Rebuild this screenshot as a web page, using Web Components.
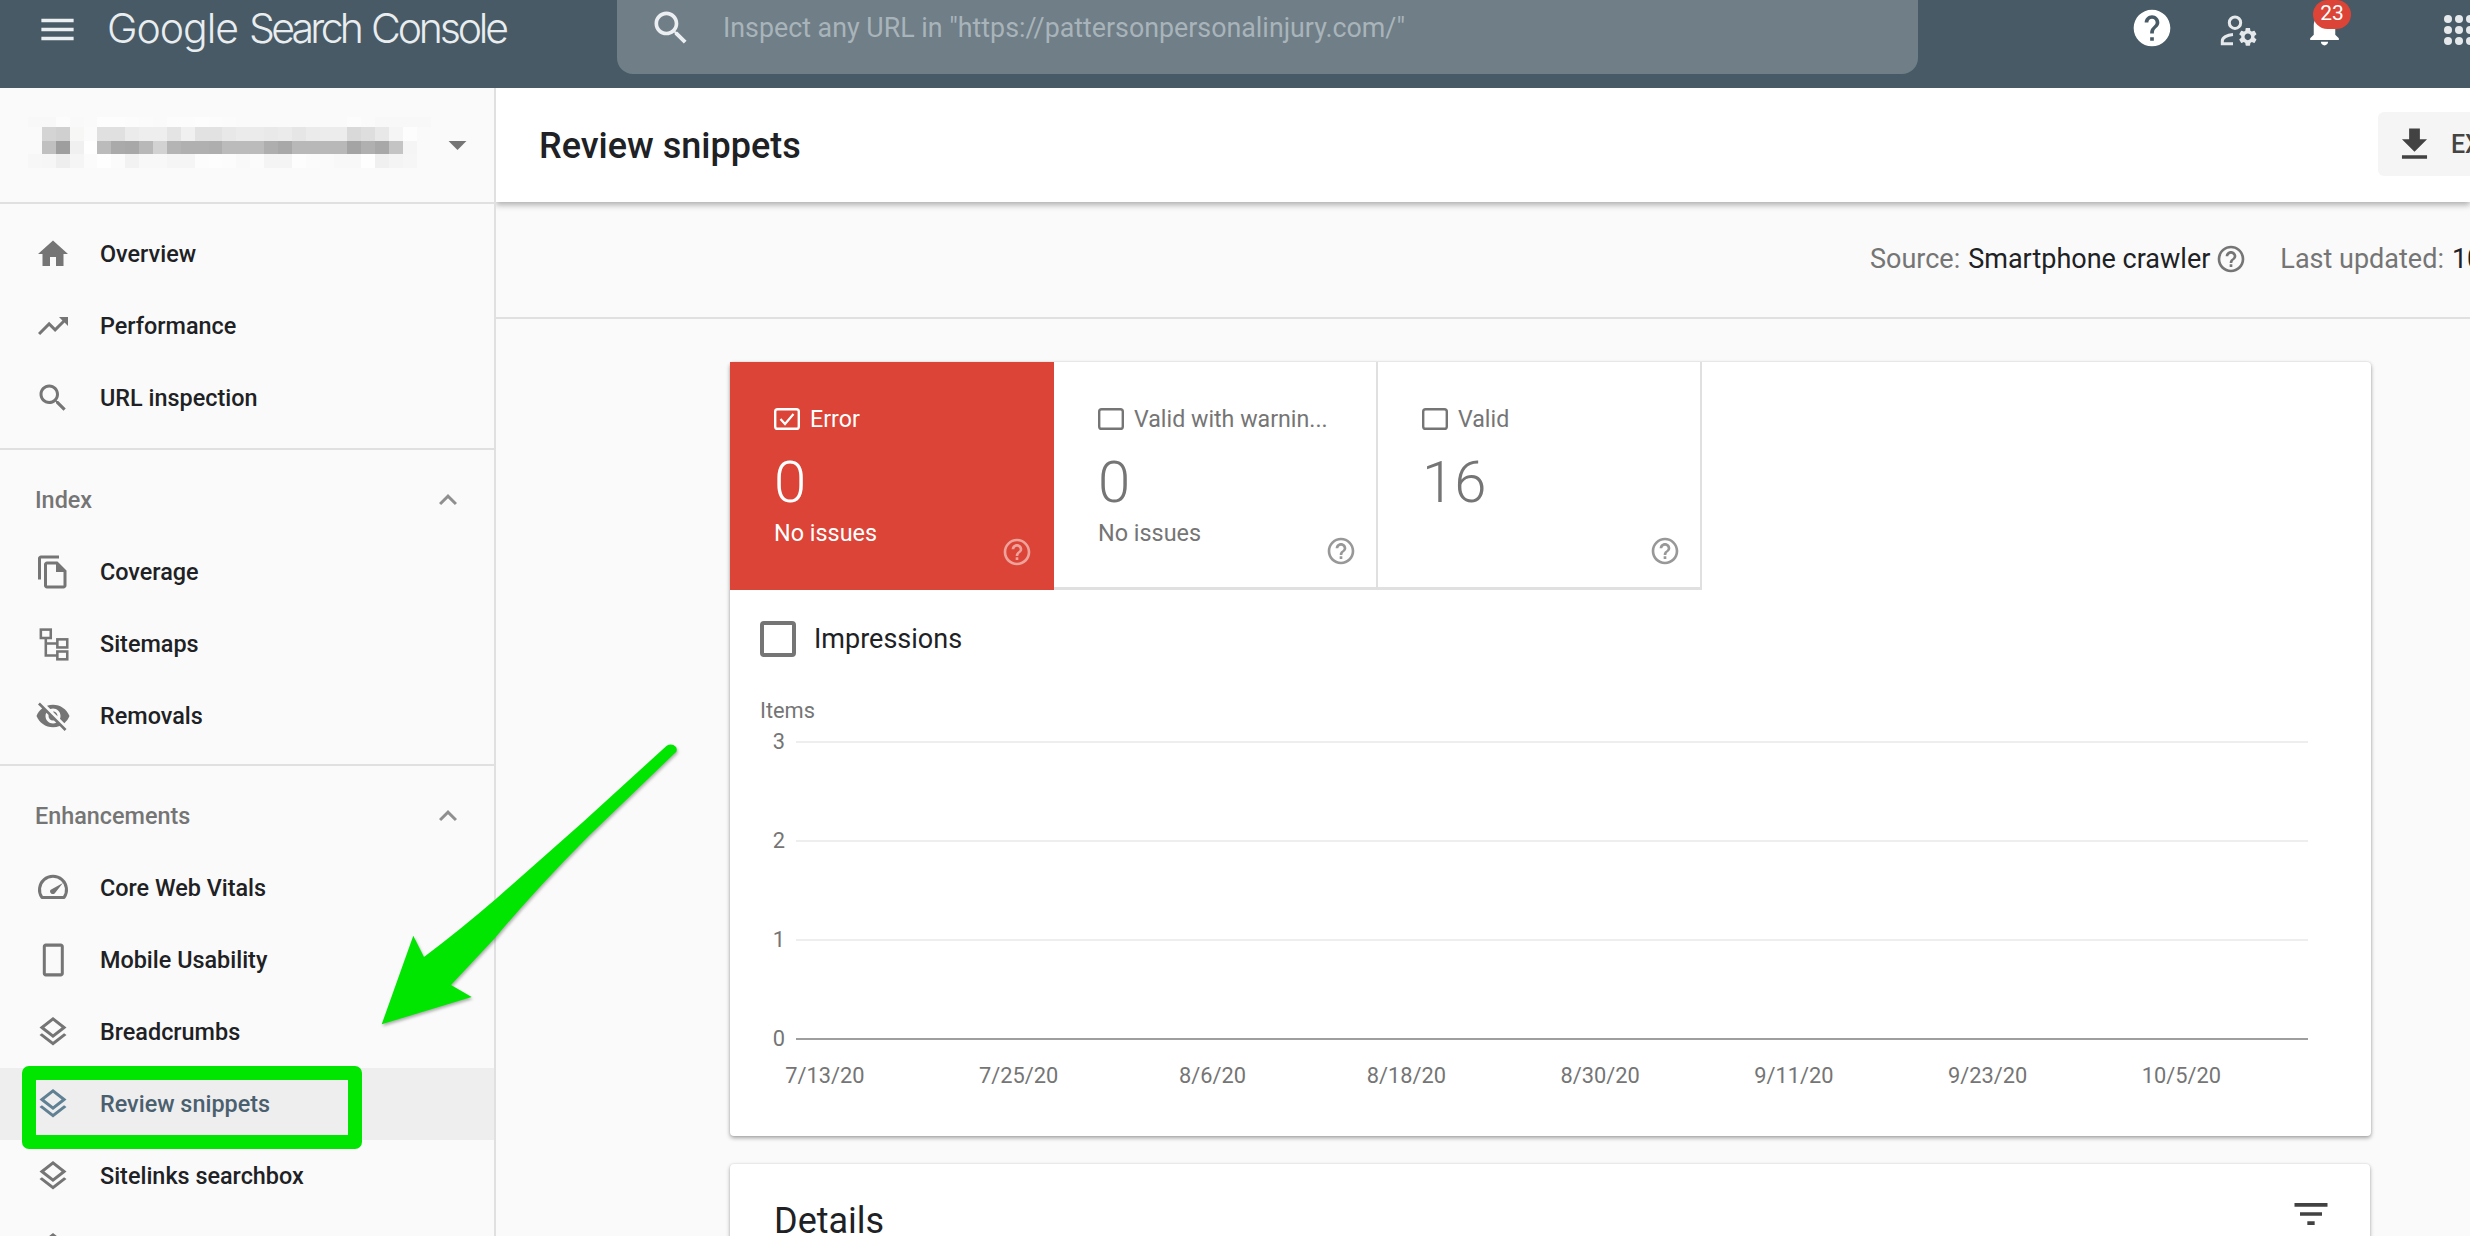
<!DOCTYPE html>
<html lang="en"><head><meta charset="utf-8"><title>Review snippets</title>
<style>
html,body{margin:0;padding:0;width:2470px;height:1236px;overflow:hidden;background:#fafafa;font-family:Roboto,"Liberation Sans",sans-serif;color:#202124}
body{display:flex;flex-direction:column;position:relative}
.shell{display:flex;height:1148px;flex:none}
</style></head><body>
<gsc-topbar></gsc-topbar>
<div class="shell">
  <gsc-sidebar>
    <gsc-property></gsc-property>
    <gsc-nav-section first>
      <gsc-nav-item icon="home">Overview</gsc-nav-item>
      <gsc-nav-item icon="trend">Performance</gsc-nav-item>
      <gsc-nav-item icon="search">URL inspection</gsc-nav-item>
    </gsc-nav-section>
    <gsc-nav-section title="Index">
      <gsc-nav-item icon="copy">Coverage</gsc-nav-item>
      <gsc-nav-item icon="sitemap">Sitemaps</gsc-nav-item>
      <gsc-nav-item icon="eyeoff">Removals</gsc-nav-item>
    </gsc-nav-section>
    <gsc-nav-section title="Enhancements">
      <gsc-nav-item icon="gauge">Core Web Vitals</gsc-nav-item>
      <gsc-nav-item icon="phone">Mobile Usability</gsc-nav-item>
      <gsc-nav-item icon="layers">Breadcrumbs</gsc-nav-item>
      <gsc-nav-item icon="layers" active>Review snippets</gsc-nav-item>
      <gsc-nav-item icon="layers">Sitelinks searchbox</gsc-nav-item>
      <gsc-nav-item icon="layers"></gsc-nav-item>
    </gsc-nav-section>
  </gsc-sidebar>
  <gsc-main>
    <gsc-page-header>Review snippets</gsc-page-header>
    <gsc-source-bar></gsc-source-bar>
    <gsc-content>
      <gsc-card>
        <gsc-tiles>
          <gsc-tile label="Error" count="0" desc="No issues" selected></gsc-tile>
          <gsc-tile label="Valid with warnin..." count="0" desc="No issues"></gsc-tile>
          <gsc-tile label="Valid" count="16"></gsc-tile>
        </gsc-tiles>
        <gsc-toggle>Impressions</gsc-toggle>
        <gsc-chart></gsc-chart>
      </gsc-card>
      <gsc-details>Details</gsc-details>
    </gsc-content>
  </gsc-main>
</div>
<gsc-highlight></gsc-highlight>
<gsc-arrow></gsc-arrow>
<script>
const P={
home:'<path d="M10 20v-6h4v6h5v-8h3L12 3 2 12h3v8z"/>',
trend:'<path d="M16 6l2.29 2.29-4.88 4.88-4-4L2 16.59 3.41 18l6-6 4 4 6.3-6.29L22 12V6z"/>',
search:'<path d="M15.5 14h-.79l-.28-.27C15.41 12.59 16 11.11 16 9.5 16 5.91 13.09 3 9.5 3S3 5.91 3 9.5 5.91 16 9.5 16c1.61 0 3.09-.59 4.23-1.57l.27.28v.79l5 4.99L20.49 19l-4.99-5zm-6 0C7.01 14 5 11.99 5 9.5S7.01 5 9.5 5 14 7.01 14 9.5 11.99 14 9.5 14z"/>',
copy:'<path d="M16 1H4c-1.1 0-2 .9-2 2v14h2V3h12V1zm-1 4H8c-1.1 0-1.99.9-1.99 2L6 21c0 1.1.89 2 1.99 2H19c1.1 0 2-.9 2-2V11l-6-6zM8 21V7h6v5h5v9H8z"/>',
sitemap:'<g fill="none" stroke="currentColor" stroke-width="1.7"><rect x="3.9" y="2.4" width="6.6" height="5.6"/><rect x="14.9" y="8.9" width="6.6" height="5.4"/><rect x="14.9" y="17" width="6.6" height="5.2"/><path d="M7.2 8v11.6h7.7M7.2 11.6h7.7"/></g>',
eyeoff:'<path d="M12 7c2.76 0 5 2.24 5 5 0 .65-.13 1.26-.36 1.83l2.92 2.92c1.51-1.26 2.7-2.89 3.43-4.75-1.73-4.39-6-7.5-11-7.5-1.4 0-2.74.25-3.98.7l2.16 2.16C10.74 7.13 11.35 7 12 7zM2 4.27l2.28 2.28.46.46C3.08 8.3 1.78 10.02 1 12c1.73 4.39 6 7.5 11 7.5 1.55 0 3.03-.3 4.38-.84l.42.42L19.73 22 21 20.73 3.27 3 2 4.27zM7.53 9.8l1.55 1.55c-.05.21-.08.43-.08.65 0 1.66 1.34 3 3 3 .22 0 .44-.03.65-.08l1.55 1.55c-.67.33-1.41.53-2.2.53-2.76 0-5-2.24-5-5 0-.79.2-1.53.53-2.2zm4.31-.78l3.15 3.15.02-.16c0-1.66-1.34-3-3-3l-.17.01z"/>',
gauge:'<path fill="none" stroke="currentColor" stroke-width="2" stroke-linejoin="round" d="M4.6 18.3A9 9 0 1 1 19.4 18.3Z"/><path d="M18.6 8.6L13.1 15.6A1.9 1.9 0 0 1 10.2 13.3Z"/>',
phone:'<path d="M17.2 1H7.2c-1.1 0-2 .9-2 2v18c0 1.1.9 2 2 2h10c1.1 0 2-.9 2-2V3c0-1.1-.9-2-2-2zM17.2 20.8h-10V3.2h10z"/>',
layers:'<path d="M11.99 18.54l-7.37-5.73L3 14.07l9 7 9-7-1.63-1.27-7.38 5.74zM12 16l7.36-5.73L21 9l-9-7-9 7 1.63 1.27L12 16zm0-11.47L17.74 9 12 13.47 6.26 9 12 4.53z"/>',
help:'<path d="M11 18h2v-2h-2v2zm1-16C6.48 2 2 6.48 2 12s4.48 10 10 10 10-4.48 10-10S17.52 2 12 2zm0 18c-4.41 0-8-3.59-8-8s3.59-8 8-8 8 3.59 8 8-3.59 8-8 8zm0-14c-2.21 0-4 1.79-4 4h2c0-1.1.9-2 2-2s2 .9 2 2c0 2-3 1.75-3 5h2c0-2.25 3-2.5 3-5 0-2.21-1.79-4-4-4z"/>',
helpfill:'<path d="M12 2C6.48 2 2 6.48 2 12s4.48 10 10 10 10-4.48 10-10S17.52 2 12 2zm1 17h-2v-2h2v2zm2.07-7.75l-.9.92C13.45 12.9 13 13.5 13 15h-2v-.5c0-1.1.45-2.1 1.17-2.83l1.24-1.26c.37-.36.59-.86.59-1.41 0-1.1-.9-2-2-2s-2 .9-2 2H8c0-2.21 1.79-4 4-4s4 1.79 4 4c0 .88-.36 1.68-.93 2.25z"/>',
menu:'<path d="M3 18h18v-2H3v2zm0-5h18v-2H3v2zm0-7v2h18V6H3z"/>',
bell:'<path d="M12 22c1.1 0 2-.9 2-2h-4c0 1.1.89 2 2 2zm6-6v-5c0-3.07-1.64-5.64-4.5-6.32V4c0-.83-.67-1.5-1.5-1.5s-1.5.67-1.5 1.5v.68C7.63 5.36 6 7.92 6 11v5l-2 2v1h16v-1l-2-2z"/>',
download:'<path d="M19 9h-4V3H9v6H5l7 7 7-7zM5 18v2h14v-2H5z"/>',
filter:'<path d="M10 18h4v-2h-4v2zM3 6v2h18V6H3zm3 7h12v-2H6v2z"/>',
up:'<path d="M12 8l-6 6 1.41 1.41L12 10.83l4.59 4.58L18 14z"/>',
drop:'<path d="M7 10l5 5 5-5z"/>'
};
function def(name,css,html,extra){
  customElements.define(name,class extends HTMLElement{
    connectedCallback(){
      if(this.shadowRoot)return;
      const r=this.attachShadow({mode:'open'});
      r.innerHTML='<style>'+css+'</style>'+(typeof html==='function'?html(this):html);
      if(extra)extra(this,r);
    }
  });
}
def('gsc-icon',':host{display:block;flex:none;width:var(--s,36px);height:var(--s,36px);color:var(--c,#757575)}svg{display:block;width:100%;height:100%;fill:currentColor}',
  h=>`<svg viewBox="0 0 24 24" aria-hidden="true">${P[h.getAttribute('name')]||''}</svg>`);

def('gsc-topbar',`
:host{display:flex;flex:none;height:88px;background:#475a65;align-items:flex-start;color:#eceff1;position:relative;z-index:3}
.menu{--s:43px;--c:#eceff1;margin:8px 0 0 36px}
.logo{display:flex;margin:0 0 0 28px;height:56px;align-items:center;font:300 41px/60px Inter,Lato,sans-serif;color:#e9edef;white-space:nowrap;width:402px;flex:none}
.logo span{display:block;flex:none}
.logo .g{width:142px}
.logo .s{width:122px}
.logo .c{width:138px}
.search{display:flex;align-items:center;box-sizing:border-box;margin-left:108px;width:1301px;height:74px;background:#6f7e87;border-radius:0 0 16px 16px;flex:none;padding-bottom:18px}
.search gsc-icon{--s:44px;--c:#eceff1;margin-left:32px}
.search span{font:400 26.8px/1 Roboto,sans-serif;color:#a9b4ba;margin-left:30px;white-space:nowrap}
.help{--s:44px;--c:#fff;margin:6px 0 0 212px}
.admin{display:block;width:40px;height:36px;margin:14px 0 0 45px;flex:none}
.bellwrap{position:relative;margin:6px 0 0 44px;flex:none;width:43px;height:44px}
.bell{--s:43px;--c:#fff}
.badge{position:absolute;left:10px;top:-6px;width:38px;height:29px;border-radius:15px;background:#db4437;color:#fff;font:400 21px/27px Roboto,sans-serif;text-align:center}
.apps{display:grid;grid-template-columns:repeat(3,8px);gap:3.2px;margin:15px 0 0 98px;flex:none}
.apps i{display:block;width:8px;height:8px;border-radius:50%;background:#e6e9eb}
`,`
<gsc-icon class="menu" name="menu"></gsc-icon>
<div class="logo"><span class="g" data-w="132">Google</span><span class="s" data-w="115">Search</span><span class="c" data-w="138">Console</span></div>
<div class="search"><gsc-icon name="search"></gsc-icon><span>Inspect any URL in "https://pattersonpersonalinjury.com/"</span></div>
<gsc-icon class="help" name="helpfill"></gsc-icon>
<svg class="admin" viewBox="0 0 40 36" fill="none" stroke="#e6e9eb"><circle cx="16" cy="8.7" r="5.7" stroke-width="3"/><path d="M14 20.5C8 21 3.3 23.5 3.3 27v2.7H14" stroke-width="3"/><g transform="translate(17.8 11.8) scale(.92)"><path fill="#e6e9eb" stroke="none" d="M19.14 12.94c.04-.3.06-.61.06-.94 0-.32-.02-.64-.07-.94l2.03-1.58c.18-.14.23-.41.12-.61l-1.92-3.32c-.12-.22-.37-.29-.59-.22l-2.39.96c-.5-.38-1.03-.7-1.62-.94l-.36-2.54c-.04-.24-.24-.41-.48-.41h-3.84c-.24 0-.43.17-.47.41l-.36 2.54c-.59.24-1.13.57-1.62.94l-2.39-.96c-.22-.08-.47 0-.59.22L2.74 8.87c-.12.21-.08.47.12.61l2.03 1.58c-.05.3-.09.63-.09.94s.02.64.07.94l-2.03 1.58c-.18.14-.23.41-.12.61l1.92 3.32c.12.22.37.29.59.22l2.39-.96c.5.38 1.03.7 1.62.94l.36 2.54c.05.24.24.41.48.41h3.84c.24 0 .44-.17.47-.41l.36-2.54c.59-.24 1.13-.56 1.62-.94l2.39.96c.22.08.47 0 .59-.22l1.92-3.32c.12-.22.07-.47-.12-.61l-2.01-1.58zM12 15.6c-1.98 0-3.6-1.62-3.6-3.6s1.62-3.6 3.6-3.6 3.6 1.62 3.6 3.6-1.62 3.6-3.6 3.6z"/></g></svg>
<div class="bellwrap"><gsc-icon class="bell" name="bell"></gsc-icon><div class="badge">23</div></div>
<div class="apps">${'<i></i>'.repeat(9)}</div>
`,(h,r)=>{
  r.querySelectorAll('.logo span').forEach(s=>{
    const m=document.createElement('span');m.textContent=s.textContent;m.style.cssText='display:inline-block;width:auto';
    s.textContent='';s.appendChild(m);
    const w=m.getBoundingClientRect().width;
    m.style.letterSpacing=((+s.dataset.w-w)/(m.textContent.length-1)).toFixed(3)+'px';
  });
});

def('gsc-sidebar',':host{display:block;flex:none;box-sizing:border-box;width:496px;height:1148px;background:#fafafa;border-right:2px solid #e0e0e0;overflow:hidden}','<slot></slot>');

const rows=[
'f8f8f8 f8f8f8 fcfcfc f9f9f9 fafafa fdfdfd fdfdfd fcfcfc fbfbfb fafafa fcfcfc fcfcfc fdfdfd fcfcfc fbfbfb fafafa fafafa fafafa fafafa fafafa fafafa fafafa fafafa fcfcfc fafafa f8f8f8 f8f8f8 f8f8f8 f8f8f8',
'fafafa d4d4d4 d0d0d0 f7f7f5 fbfbfb e0e0e0 e0e0e0 ebebeb eeeeee eeeeee e4e4e4 f0f0f0 e2e2e2 e2e2e2 e8e8e8 ebebeb ebebeb e9e9e9 ebebeb e6e6e6 ebebeb ececec ececec d9d9d9 dedede e8e8e8 f5f5f5 fdfdfd fafafa',
'fafafa c0c0c0 9e9e9e f0f0f0 fefefe bbbbbb aaaaaa a8a8a8 b8b8b8 d2d2d2 b4b4b4 b0b0b0 b0b0b0 aeaeae bbbbbb bbbbbb bbbbbb aeaeae a8a8a8 b8b8b8 b8b8b8 b8b8b8 b8b8b8 a4a4a4 b0b0b0 a8a8a8 c4c4c4 f5f5f5 fafafa',
'f7f7f7 f6f6f6 eeeeee f5f5f5 fbfbfb fefefe fbfbfb f2f2f2 f8f8f8 f8f8f8 f5f5f5 f5f5f5 fcfcfc fdfdfd fcfcfc f9f9f9 fbfbfb f4f4f4 f4f4f4 fdfdfd fbfbfb fafafa f8f8f8 f8f8f8 fefefe f0f0f0 f4f4f4 f6f6f6 fafafa'
];
def('gsc-property',`
:host{display:flex;box-sizing:border-box;height:116px;border-bottom:2px solid #e0e0e0;padding:29px 0 0 28px;gap:0}
.mosaic{display:grid;grid-template-columns:repeat(29,13.9px);grid-template-rows:10px 14px 13px 14px;width:403px;height:51px;filter:blur(.7px);flex:none}
.mosaic i{display:block}
gsc-icon{--s:43px;--c:#757575;margin:6px 0 0 5.4px}
`,`<div class="mosaic">${rows.map(r=>r.split(' ').map(c=>`<i style="background:#${c}"></i>`).join('')).join('')}</div><gsc-icon name="drop"></gsc-icon>`);

def('gsc-nav-section',`
:host{display:block;box-sizing:border-box;padding:14px 0 12px;border-bottom:2px solid #e0e0e0}
:host([first]){padding:14px 0 14px}
:host(:last-child){border-bottom:0}
header{display:flex;align-items:center;height:72px;padding-left:35px;padding-right:28px;font:500 23.4px/1 Roboto,sans-serif;color:#757575}
header span{flex:1;padding-top:2px}
gsc-icon{--s:36px;--c:#8f8f8f}
`,h=>{const t=h.getAttribute('title');return (t?`<header><span>${t}</span><gsc-icon name="up"></gsc-icon></header>`:'')+'<slot></slot>'});

def('gsc-nav-item',`
:host{display:flex;align-items:center;height:72px;padding-left:35px;font:500 23.4px/1 Roboto,sans-serif;color:#202124;white-space:nowrap}
:host([active]){background:#eeeeee;color:#4a606e}
:host([active]) gsc-icon{--c:#5f8193}
gsc-icon{--s:36px;margin-right:29px}
span{padding-top:2px}
`,h=>`<gsc-icon name="${h.getAttribute('icon')}"></gsc-icon><span><slot></slot></span>`);

def('gsc-main',':host{display:flex;flex-direction:column;flex:1;min-width:0;overflow:hidden}','<slot></slot>');

def('gsc-page-header',`
:host{display:flex;flex:none;box-sizing:border-box;height:114px;background:#fff;align-items:center;padding-left:43px;box-shadow:0 3px 6px rgba(0,0,0,.3);position:relative;z-index:2}
h1{margin:2px 0 0;font:500 36px/1 Roboto,sans-serif;color:#202124;flex:1;white-space:nowrap}
.btn{display:flex;align-items:center;box-sizing:border-box;width:170px;height:64px;margin:-2px -78px 0 0;background:#f5f5f5;border-radius:6px;padding-left:15px;flex:none;font:500 25px/1 Roboto,sans-serif;color:#444}
.btn gsc-icon{--s:43px;--c:#424242;margin-right:15px}
`,`<h1><slot></slot></h1><div class="btn"><gsc-icon name="download"></gsc-icon>EXPORT</div>`);

def('gsc-source-bar',`
:host{display:flex;flex:none;box-sizing:border-box;height:117px;padding:0 0 1px 1374px;align-items:center;border-bottom:2px solid #e0e0e0;font:400 27px/1 Roboto,sans-serif;color:#757575;white-space:nowrap}
b{font-weight:400;color:#202124;margin-left:8px}
gsc-icon{--s:32px;margin:0 0 0 5px}
.l{margin-left:33px}
`,`Source:<b>Smartphone crawler</b><gsc-icon name="help"></gsc-icon><span class="l">Last updated:</span><b>10/18/20</b>`);

def('gsc-content',':host{display:flex;flex-direction:column;flex:none;box-sizing:border-box;padding:43px 0 0 234px;gap:28px}','<slot></slot>');

def('gsc-card',':host{display:block;box-sizing:border-box;width:1641px;height:774px;background:#fff;border-radius:4px;box-shadow:0 2px 4px rgba(0,0,0,.35),0 0 2px rgba(0,0,0,.12);flex:none}','<slot></slot>');

def('gsc-tiles',':host{display:flex;height:228px}','<slot></slot>');

def('gsc-tile',`
:host{display:grid;box-sizing:border-box;width:324px;height:228px;border-right:2px solid #e0e0e0;border-bottom:3px solid #e0e0e0;color:#757575;--h:rgba(117,117,117,.75)}
:host([selected]){background:#db4437;color:#fff;border:0;--h:rgba(255,255,255,.5)}
.body{grid-area:1/1;padding:46px 0 0 44px;display:flex;flex-direction:column}
.lab{display:flex;align-items:center;height:22px;font:400 23.2px/22px Roboto,sans-serif;white-space:nowrap}
.lab svg{width:26px;height:22px;margin-right:10px;flex:none}
.num{font:400 58px/64px Roboto,sans-serif;margin-top:20px;font-weight:300}
.desc{font:400 23.4px/28px Roboto,sans-serif;margin-top:5px;white-space:nowrap}
gsc-icon{grid-area:1/1;justify-self:end;align-self:end;--s:32px;--c:var(--h);margin:0 19px 20px 0}
:host([selected]) gsc-icon{margin:0 21px 22px 0}
`,h=>{const s=h.hasAttribute('selected');const col=s?'#fff':'#757575';
return `<div class="body"><div class="lab"><svg viewBox="0 0 26 22" fill="none" stroke="${col}" stroke-width="2.4"><rect x="1.2" y="1.2" width="23.6" height="19.6" rx="2.4"/>${s?'<path d="M6.5 11l4.5 5 8.5-10" stroke-width="2.2"/>':''}</svg>${h.getAttribute('label')}</div><div class="num">${h.getAttribute('count')}</div><div class="desc">${h.getAttribute('desc')||''}</div></div><gsc-icon name="help"></gsc-icon>`});

def('gsc-toggle',`
:host{display:flex;align-items:center;height:98px;padding-left:30px;font:400 27px/1 Roboto,sans-serif;color:#202124}
i{display:block;box-sizing:border-box;width:36px;height:36px;border:4px solid #757575;border-radius:4px;margin-right:18px}
`,'<i></i><slot></slot>');

def('gsc-chart',`
:host{display:block;padding:11px 0 0 30px;font:400 21.8px/24px Roboto,sans-serif;color:#757575;white-space:nowrap}
.items{height:24px}
.rows{display:flex;flex-direction:column;gap:69px;margin-top:4px;margin-left:-30px}
.row{display:flex;align-items:center;height:30px}
.row span{width:55px;text-align:right;margin-right:11px;flex:none}
.row i{display:block;width:1512px;height:2px;background:#eeeeee}
.row.zero i{background:#9e9e9e}
.x{display:flex;margin:7px 0 0 -32px;height:30px;line-height:30px}
.x span{flex:none;width:193.8px;text-align:center}
`,`<div class="items">Items</div><div class="rows">${[3,2,1,0].map(n=>`<div class="row${n?'':' zero'}"><span>${n}</span><i></i></div>`).join('')}</div><div class="x">${['7/13/20','7/25/20','8/6/20','8/18/20','8/30/20','9/11/20','9/23/20','10/5/20'].map(t=>`<span>${t}</span>`).join('')}</div>`);

def('gsc-details',`
:host{display:flex;box-sizing:border-box;width:1640px;height:200px;flex:none;background:#fff;border-radius:4px;box-shadow:0 2px 4px rgba(0,0,0,.3),0 0 2px rgba(0,0,0,.12);justify-content:space-between;align-items:flex-start;padding:28px 37px 0 44px}
h2{margin:7px 0 0;font:400 36px/44px Roboto,sans-serif;color:#202124}
gsc-icon{--s:44px;--c:#424242}
`,`<h2><slot></slot></h2><gsc-icon name="filter"></gsc-icon>`);

def('gsc-highlight',':host{position:absolute;left:22px;top:1066px;width:340px;height:83px;box-sizing:border-box;border:14px solid #00e600;border-radius:7px;z-index:5;pointer-events:none}','');
def('gsc-arrow',':host{position:absolute;left:370px;top:735px;width:320px;height:300px;z-index:5;pointer-events:none}svg{display:block;overflow:visible;filter:drop-shadow(1px 2px 1.5px rgba(0,0,0,.3))}',
`<svg width="320" height="300" viewBox="0 0 320 300"><path fill="#00e600" d="M11.7 289.3L43.3 200.7 54 222Q90 195 126.7 163.3L213 87 296.7 10.7Q302 8 306 12 308 16 305 18L218 101.7Q165 155 125 203L81 250 101.7 262Z"/></svg>`);
</script>
</body></html>
